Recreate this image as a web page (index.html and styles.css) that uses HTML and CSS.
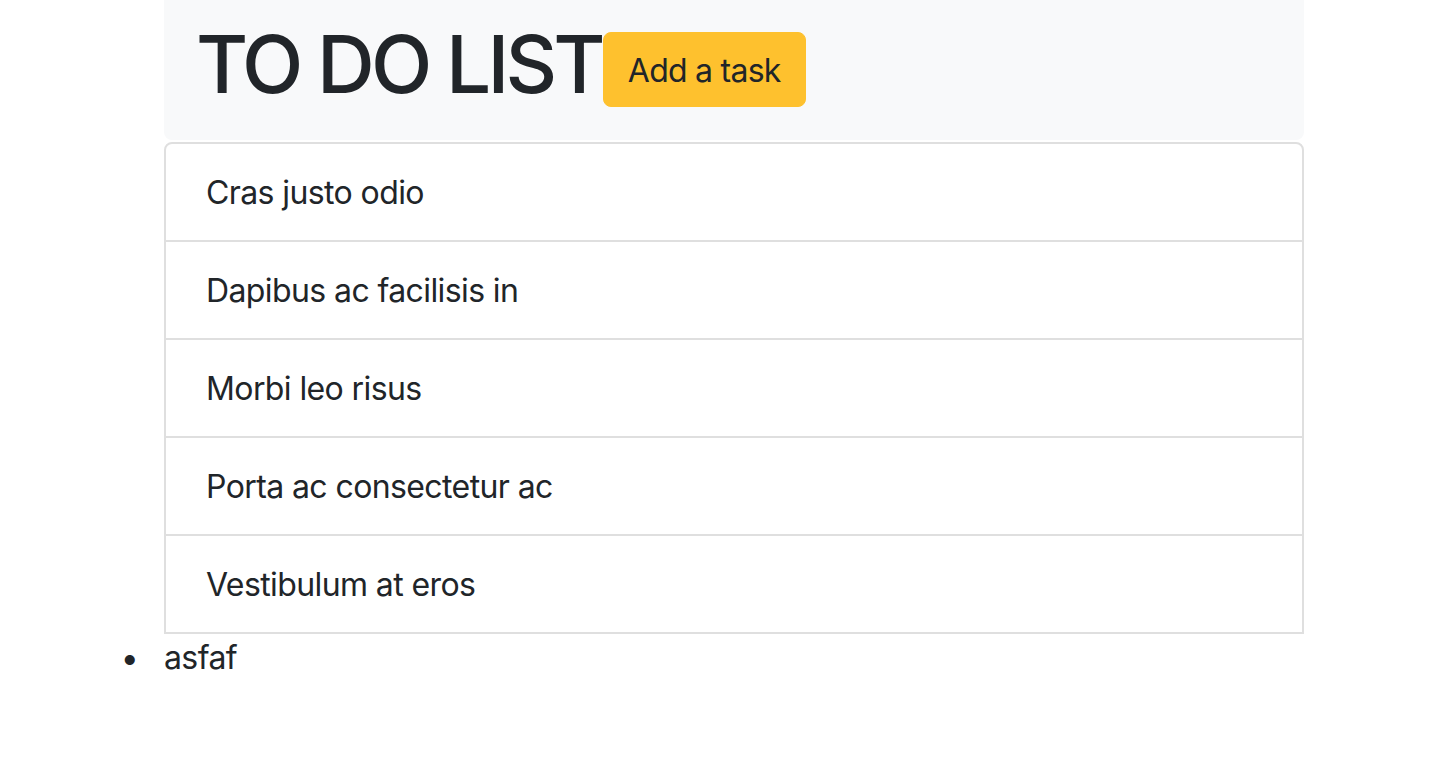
FILE: index.html
```html
<!DOCTYPE html>
<html lang="en">
<head>
<meta charset="utf-8">
<title>To Do List</title>
<link rel="stylesheet" href="styles.css">
</head>
<body>
<div class="page">
  <header class="banner">
    <h1 class="title">TO DO LIST</h1><button class="add-btn" type="button">Add a task</button>
  </header>
  <ul class="list-group">
    <li class="list-item">Cras justo odio</li>
    <li class="list-item">Dapibus ac facilisis in</li>
    <li class="list-item">Morbi leo risus</li>
    <li class="list-item">Porta ac consectetur ac</li>
    <li class="list-item">Vestibulum at eros</li>
  </ul>
  <ul class="tasks">
    <li class="task">asfaf</li>
  </ul>
</div>
</body>
</html>
```

FILE: styles.css
```css
* { box-sizing: border-box; }
html, body {
  margin: 0;
  padding: 0;
  background: #fff;
}
body {
  font-family: Inter, "Noto Sans", "Liberation Sans", sans-serif;
  color: #212529;
  font-size: 32px;
  line-height: 48px;
  letter-spacing: -0.6px;
}
.page {
  width: 1140px;
  margin-left: 164px;
}
.banner {
  background: #f8f9fa;
  border-radius: 0 0 8px 8px;
  padding: 16px 32px 28px 32px;
  display: flex;
  align-items: flex-start;
  height: 140px;
}
.title {
  margin: 0;
  font-size: 80px;
  line-height: 96px;
  font-weight: 500;
  letter-spacing: -3.8px;
}
.add-btn {
  margin-top: 16px;
  margin-left: 1px;
  font-family: inherit;
  font-size: 32px;
  line-height: 48px;
  letter-spacing: -0.75px;
  color: #212529;
  background: #fec12e;
  border: 1px solid #fec12e;
  border-radius: 8px;
  padding: 14px 24px 11px 24px;
  cursor: pointer;
}
.list-group {
  list-style: none;
  margin: 2px 0 0 0;
  padding: 0;
  border: 2px solid #dfdfdf;
  border-radius: 8px 8px 0 0;
}
.list-item {
  height: 98px;
  padding: 25px 40px 23px 40px;
  border-top: 2px solid #dfdfdf;
  line-height: 48px;
}
.list-item:first-child {
  border-top: none;
  height: 96px;
}
.tasks {
  margin: 0;
  padding: 0;
  list-style: disc outside;
}
.task {
  line-height: 48px;
}
.task::marker {
  content: "\2022\2002\2009\2009";
}
```
